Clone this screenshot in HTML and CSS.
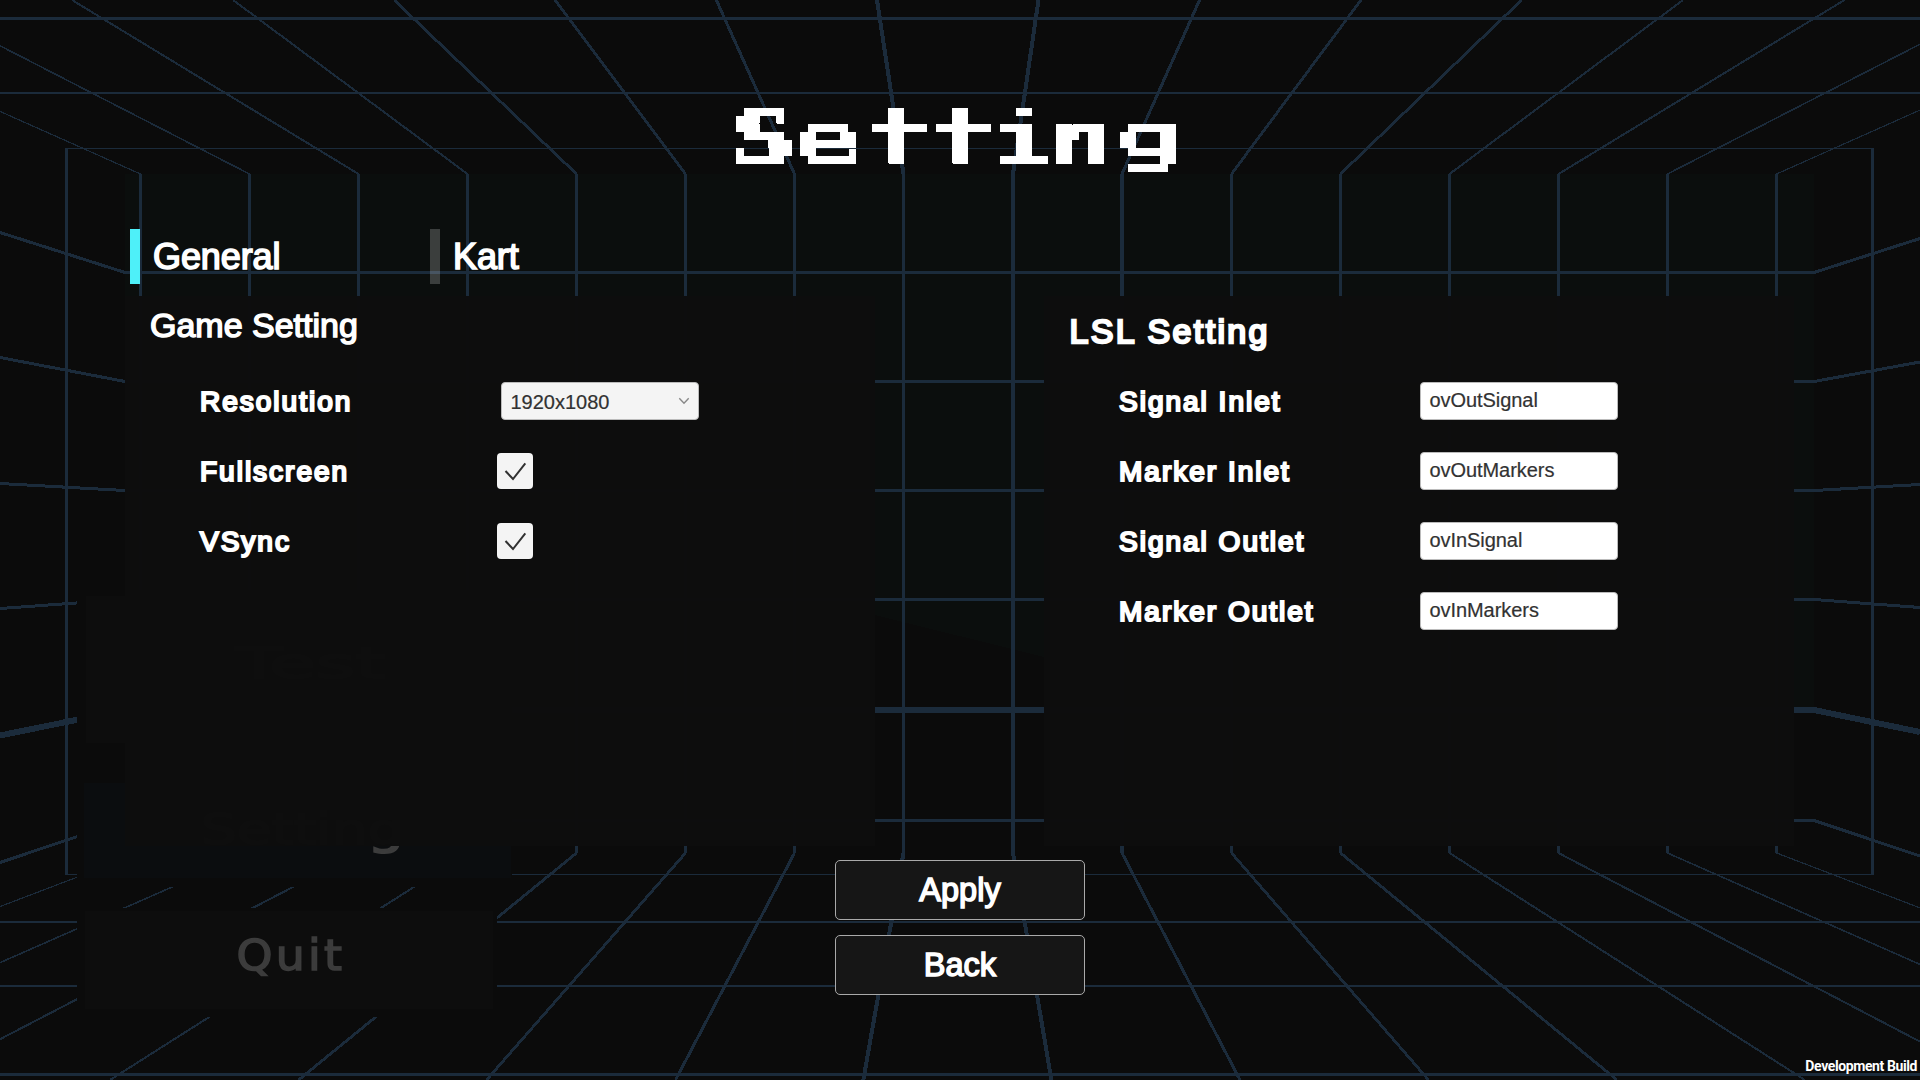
FILE: index.html
```html
<!DOCTYPE html>
<html lang="en">
<head>
<meta charset="utf-8">
<title>Setting</title>
<link rel="stylesheet" href="styles.css">
</head>
<body>
<div class="stage">
  <svg class="room" viewBox="0 0 1920 1080" aria-hidden="true">
    <path class="wall" d="M125 174H1814V710L1044 657L875 615L125 600Z"/>
    <g class="w1">
      <path d="M66 148.5H1873M66 874.5H1873"/>
      <path d="M140.5 174L-250 0M1776.5 174L2167 0M140.5 853L-455 1080M1776.5 853L2370 1080"/>
    </g>
    <g class="w15">
      <path d="M249.5 174L-89 0M1667.5 174L2006 0M249.5 853L-267 1080M1667.5 853L2182 1080"/>
    </g>
    <g class="w2">
      <path d="M0 93H1920M0 922H1920M0 986H1920"/>
      <path d="M358.5 174L72 0M1558.5 174L1844.5 0M358.5 853L-78.5 1080M1558.5 853L1993.6 1080"/>
      <path d="M467.5 174L233 0M1449.5 174L1683 0M467.5 853L110 1080M1449.5 853L1805 1080"/>
    </g>
    <g class="w25">
      <path d="M576.5 174L394 0M1340.5 174L1521.6 0M576.5 853L298.5 1080M1340.5 853L1617 1080"/>
      <path d="M685.5 174L555 0M1231.5 174L1361 0M685.5 853L486.5 1080M1231.5 853L1428.6 1080"/>
    </g>
    <g class="w3">
      <path d="M0 18.5H1920M0 1074.5H1920M66.5 148V875M1872.5 148V875"/>
      <path d="M140.5 174V853M249.5 174V853M358.5 174V853M467.5 174V853M576.5 174V853M685.5 174V853M794.5 174V853M903.5 174V853M1231.5 174V853M1340.5 174V853M1449.5 174V853M1558.5 174V853M1667.5 174V853M1776.5 174V853"/>
      <path d="M0 232.5L125 272.5H1814L1920 238.5"/>
      <path d="M0 357.5L125 381.5H1814L1920 362"/>
      <path d="M0 483.5L125 490.5H1814L1920 484.5"/>
      <path d="M0 608.5L125 599.5H1814L1920 607.5"/>
      <path d="M0 862.5L125 820.5H1814L1920 856"/>
      <path d="M794.5 174L716.3 0M1122 174L1199.6 0M794.5 853L675.5 1080M1122 853L1240 1080"/>
    </g>
    <g class="w4">
      <path d="M1013 174V853M1122 174V853"/>
      <path d="M903.5 174L877 0M1013 174L1038.5 0M903.5 853L863.3 1080M1013 853L1051.4 1080"/>
    </g>
    <path class="w6" d="M0 735.5L125 710H1814L1920 732"/>
  </svg>

  <div class="menu" aria-hidden="true">
    <div class="entry entry-test"><span>Test</span></div>
    <div class="entry entry-setting"><span>Setting</span></div>
    <div class="entry entry-quit"><span>Quit</span></div>
  </div>

  <main class="screen">
    <h1 class="title">
      <svg viewBox="0 0 480 100" width="480" height="100" role="img" aria-label="Setting">
        <defs>
          <!-- samples the text once per 8px cell and grows each sample to a full cell -->
          <filter id="pixel" filterUnits="userSpaceOnUse" x="0" y="0" width="480" height="100" color-interpolation-filters="sRGB">
            <feFlood x="3" y="5" width="2" height="2" flood-color="#fff"/>
            <feOffset x="0" y="2" width="8" height="8"/>
            <feTile result="dots"/>
            <feComponentTransfer in="SourceGraphic" result="solid"><feFuncA type="discrete" tableValues="0 0 1 1 1"/></feComponentTransfer>
            <feComposite in="solid" in2="dots" operator="in"/>
            <feMorphology operator="dilate" radius="3"/>
          </filter>
          <clipPath id="trim">
            <path clip-rule="evenodd" d="M0 18H480V82H0ZM184 50H208V82H184ZM248 50H280V82H248Z"/>
          </clipPath>
        </defs>
        <g clip-path="url(#trim)">
          <g class="pixel-text" filter="url(#pixel)">
            <text transform="translate(0 74) scale(1 .7)" x="11.5 75.5 147 211 268 330.5"><tspan class="heavy">S</tspan>ettin</text>
            <text transform="translate(0 68) scale(1 .58)" x="396">g</text>
          </g>
        </g>
      </svg>
    </h1>

    <nav class="tabs">
      <a class="tab active">General</a>
      <a class="tab">Kart</a>
    </nav>

    <div class="panels">
      <section class="panel">
        <h2 class="game">Game Setting</h2>
        <div class="row"><label>Resolution</label>
          <div class="field select"><span>1920x1080</span><svg width="12" height="8" viewBox="0 0 12 8"><path d="M1.3 1.3L6 6.2L10.7 1.3"/></svg></div></div>
        <div class="row"><label>Fullscreen</label>
          <div class="check"><svg width="36" height="36" viewBox="0 0 36 36"><path d="M8.5 18L16 26L28.3 10.3"/></svg></div></div>
        <div class="row"><label>VSync</label>
          <div class="check"><svg width="36" height="36" viewBox="0 0 36 36"><path d="M8.5 18L16 26L28.3 10.3"/></svg></div></div>
      </section>
      <section class="panel">
        <h2 class="lsl">LSL Setting</h2>
        <div class="row"><label>Signal Inlet</label><div class="field input">ovOutSignal</div></div>
        <div class="row"><label>Marker Inlet</label><div class="field input">ovOutMarkers</div></div>
        <div class="row"><label>Signal Outlet</label><div class="field input">ovInSignal</div></div>
        <div class="row"><label>Marker Outlet</label><div class="field input">ovInMarkers</div></div>
      </section>
    </div>

    <div class="actions">
      <button>Apply</button>
      <button>Back</button>
    </div>
  </main>
  <div class="build">Development Build</div>
</div>
</body>
</html>
```
FILE: styles.css
```css
* { box-sizing: border-box; }
body { margin: 0; background: #0b0b0b; font-family: "Liberation Sans", Arial, sans-serif; color: #fff; }
.stage { position: relative; width: 1920px; height: 1080px; overflow: hidden; }

/* background room */
.room { position: absolute; inset: 0; width: 1920px; height: 1080px; fill: none; stroke: #1b2b3b; shape-rendering: crispEdges; }
.wall { fill: #0b0e0d; stroke: none; }
.w1 { stroke-width: 1.2; }
.w15 { stroke-width: 1.6; }
.w2 { stroke-width: 2; }
.w25 { stroke-width: 2.8; }
.w3 { stroke-width: 3; }
.w4 { stroke-width: 4; }
.w6 { stroke-width: 6; }

/* dimmed main menu behind the settings screen */
.menu { position: absolute; left: 77px; top: 590px; display: flex; flex-direction: column; align-items: flex-start; }
.entry { width: 435px; background: #0b0b0b; color: #3c3c3c; font: 42px/1 "DejaVu Sans", sans-serif; display: flex; align-items: center; justify-content: center; }
.entry-test { height: 190px; padding: 0 0 12px 24px; background: #0d0d0d; border: solid #0b0b0b; border-width: 6px 1px 37px 9px; -webkit-text-stroke: 2px #3c3c3c; }
.entry-test span { transform: scaleX(1.8); }
.entry-setting { height: 107px; background: #0b0d0f; border: solid #0b0b0b; border-width: 3px 1px 9px 7px; padding: 0 0 1px 10px; -webkit-text-stroke: 2px #3c3c3c; }
.entry-setting span { transform: scaleX(1.35); }
.entry-quit { width: 420px; height: 109px; margin-top: 21px; background: #0d0d0d; border: solid #0b0b0b; border-width: 3px 4px 8px 8px; padding: 0 0 8px 3px; -webkit-text-stroke: 1.5px #3c3c3c; letter-spacing: 3px; }
.entry-quit span { transform: scaleX(1.09); }

/* settings screen */
.screen { position: relative; height: 1080px; display: flex; flex-direction: column; align-items: center; padding-top: 90px; }
.title { margin: 0; height: 139px; width: 480px; }
.title svg { display: block; }
.pixel-text { font: bold 108px "DejaVu Sans Mono", monospace; fill: #fff; }
.heavy { stroke: #fff; stroke-width: 2px; }

.tabs { align-self: stretch; display: flex; padding-left: 130px; height: 67px; }
.tab { width: 300px; height: 55px; border-left: 10px solid rgba(255,255,255,.2); padding-left: 13px; font-size: 36px; line-height: 56px; letter-spacing: -.1px; -webkit-text-stroke: 1.6px #fff; }
.tab.active { border-left-color: #4ef0f9; }

.panels { align-self: stretch; display: flex; gap: 169px; padding-left: 125px; }
.panel { width: 750px; height: 550px; background: rgba(13,13,13,.985); }
.panel h2 { margin: 0; height: 70px; padding-left: 25px; font-weight: 400; font-size: 34px; line-height: 58px; -webkit-text-stroke: 1.5px #fff; }
.panel h2.game { letter-spacing: 0; }
.panel h2.lsl { padding-left: 25.5px; line-height: 71px; letter-spacing: 2.35px; -webkit-text-stroke: 2.4px #fff; }
.row { display: flex; align-items: center; height: 70px; padding-left: 75px; }
.row label { width: 301.4px; padding-top: 2px; font-size: 28px; line-height: 32px; letter-spacing: 2px; -webkit-text-stroke: 2.2px #fff; }
.field { width: 198px; height: 38px; border-radius: 4px; color: #323232; font-size: 20px; line-height: 38px; padding: 0 8px; border: 1px solid #bbb; }
.select { background: #f4f4f4; display: flex; align-items: center; justify-content: space-between; -webkit-text-stroke: .2px #323232; }
.select span { padding-top: 2px; }
.select svg { fill: none; stroke: #888; stroke-width: 1.4; }
.input { background: #fff; line-height: 35px; letter-spacing: -.05px; -webkit-text-stroke: .2px #323232; }
.check { width: 36px; height: 36px; margin-left: -4px; border-radius: 4px; background: #f4f4f4; }
.check svg { display: block; fill: none; stroke: #323232; stroke-width: 2; }

.actions { display: flex; flex-direction: column; gap: 15px; padding-top: 14px; }
.actions button { width: 250px; height: 60px; padding: 0; border: 1px solid #aaa; border-radius: 5px; background: #161616; color: #fff; font: 32.5px/58px "Liberation Sans", Arial, sans-serif; -webkit-text-stroke: 1.5px #fff; }

.build { position: absolute; right: 3px; bottom: 5px; font: bold 14px/18px Roboto, sans-serif; letter-spacing: -.4px; white-space: nowrap; }
```
